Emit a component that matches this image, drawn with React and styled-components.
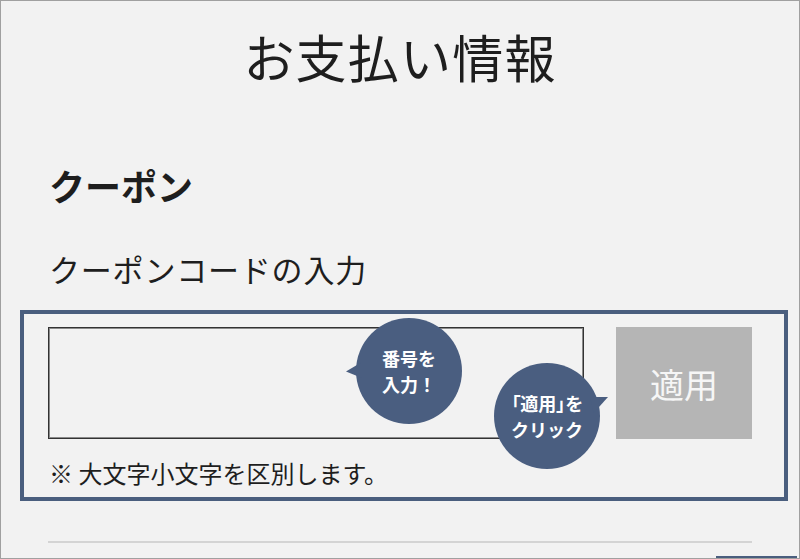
import React from "react";
import styled, { createGlobalStyle } from "styled-components";

const GlobalStyle = createGlobalStyle`
  * { box-sizing: border-box; }
  html, body {
    margin: 0;
    padding: 0;
    background: #f2f2f2;
    font-family: "Noto Sans CJK JP", "Noto Sans", sans-serif;
    color: #222;
  }
`;

const Frame = styled.div`
  position: relative;
  width: 800px;
  height: 559px;
  border: 1px solid #a0a0a0;
  background: #f2f2f2;
  overflow: hidden;
`;

const Column = styled.div`
  display: flex;
  flex-direction: column;
  padding: 0 47px;
`;

const PageTitle = styled.h1`
  margin: 30px 0 0;
  font-size: 51px;
  line-height: 1;
  font-weight: 400;
  text-align: center;
  letter-spacing: 1.2px;
  color: #1e1e1e;
`;

const SectionTitle = styled.h2`
  margin: 85px 0 0 1px;
  font-size: 36px;
  line-height: 1;
  font-weight: 700;
  color: #1e1e1e;
`;

const FieldLabel = styled.div`
  margin: 50px 0 0 1px;
  font-size: 31px;
  line-height: 1;
  letter-spacing: 0.8px;
  color: #1e1e1e;
`;

/* annotation frame drawn around the coupon form */
const Highlight = styled.div`
  position: relative;
  margin: 26px -36px 0 -28px;
  border: 4px solid #4a5e7e;
  padding: 13px 32px 12px 24px;
`;

const FormRow = styled.div`
  display: flex;
  gap: 32px;
`;

const CodeInput = styled.input`
  flex: 1;
  height: 112px;
  margin: 0;
  border: 1px solid #333;
  box-shadow: inset 0 0 0 1px #8a8a8a;
  background: #f2f2f2;
  font-size: 24px;
  padding: 0 12px;
  outline: none;
`;

const ApplyButton = styled.button`
  width: 136px;
  height: 112px;
  border: none;
  background: #b5b5b5;
  color: #f6f6f6;
  font-family: inherit;
  font-size: 34px;
  font-weight: 400;
  padding: 0;
`;

const Note = styled.p`
  margin: 22px 0 0 1px;
  font-size: 24px;
  line-height: 1;
  color: #1e1e1e;
`;

const Bubble = styled.div`
  position: absolute;
  left: ${({ $left }) => $left}px;
  top: ${({ $top }) => $top}px;
  width: 106px;
  height: 106px;
  border-radius: 50%;
  background: #4a5e80;
  color: #fff;
  display: flex;
  flex-direction: column;
  align-items: center;
  justify-content: center;
  font-size: 18px;
  font-weight: 700;
  line-height: 26px;
  z-index: 2;

  &::before {
    content: "";
    position: absolute;
    background: #4a5e80;
    ${({ $tail }) =>
      $tail === "left"
        ? `left: -10px; top: 44px; width: 16px; height: 16px;
           clip-path: polygon(0 60%, 100% 0, 100% 100%);`
        : `right: -8px; top: 34px; width: 18px; height: 16px;
           clip-path: polygon(0 0, 100% 0, 20% 100%);`}
  }
`;

const Tight = styled.span`
  font-feature-settings: "palt";
`;

const Divider = styled.hr`
  margin: 40px 0 0;
  border: none;
  border-top: 2px solid #d4d4d4;
`;

const FloatingEdge = styled.div`
  position: absolute;
  right: 2px;
  bottom: 0;
  width: 81px;
  height: 2px;
  background: #4a5e7e;
`;

export default function App() {
  return (
    <>
      <GlobalStyle />
      <Frame>
        <Column>
          <PageTitle>お支払い情報</PageTitle>
          <SectionTitle>クーポン</SectionTitle>
          <FieldLabel>クーポンコードの入力</FieldLabel>
          <Highlight>
            <FormRow>
              <CodeInput type="text" />
              <ApplyButton>適用</ApplyButton>
            </FormRow>
            <Note>※ 大文字小文字を区別します。</Note>
            <Bubble $left={332} $top={4} $tail="left">
              <span>番号を</span>
              <span>入力！</span>
            </Bubble>
            <Bubble $left={470} $top={49} $tail="right">
              <Tight>「適用」を</Tight>
              <span>クリック</span>
            </Bubble>
          </Highlight>
          <Divider />
        </Column>
        <FloatingEdge />
      </Frame>
    </>
  );
}
